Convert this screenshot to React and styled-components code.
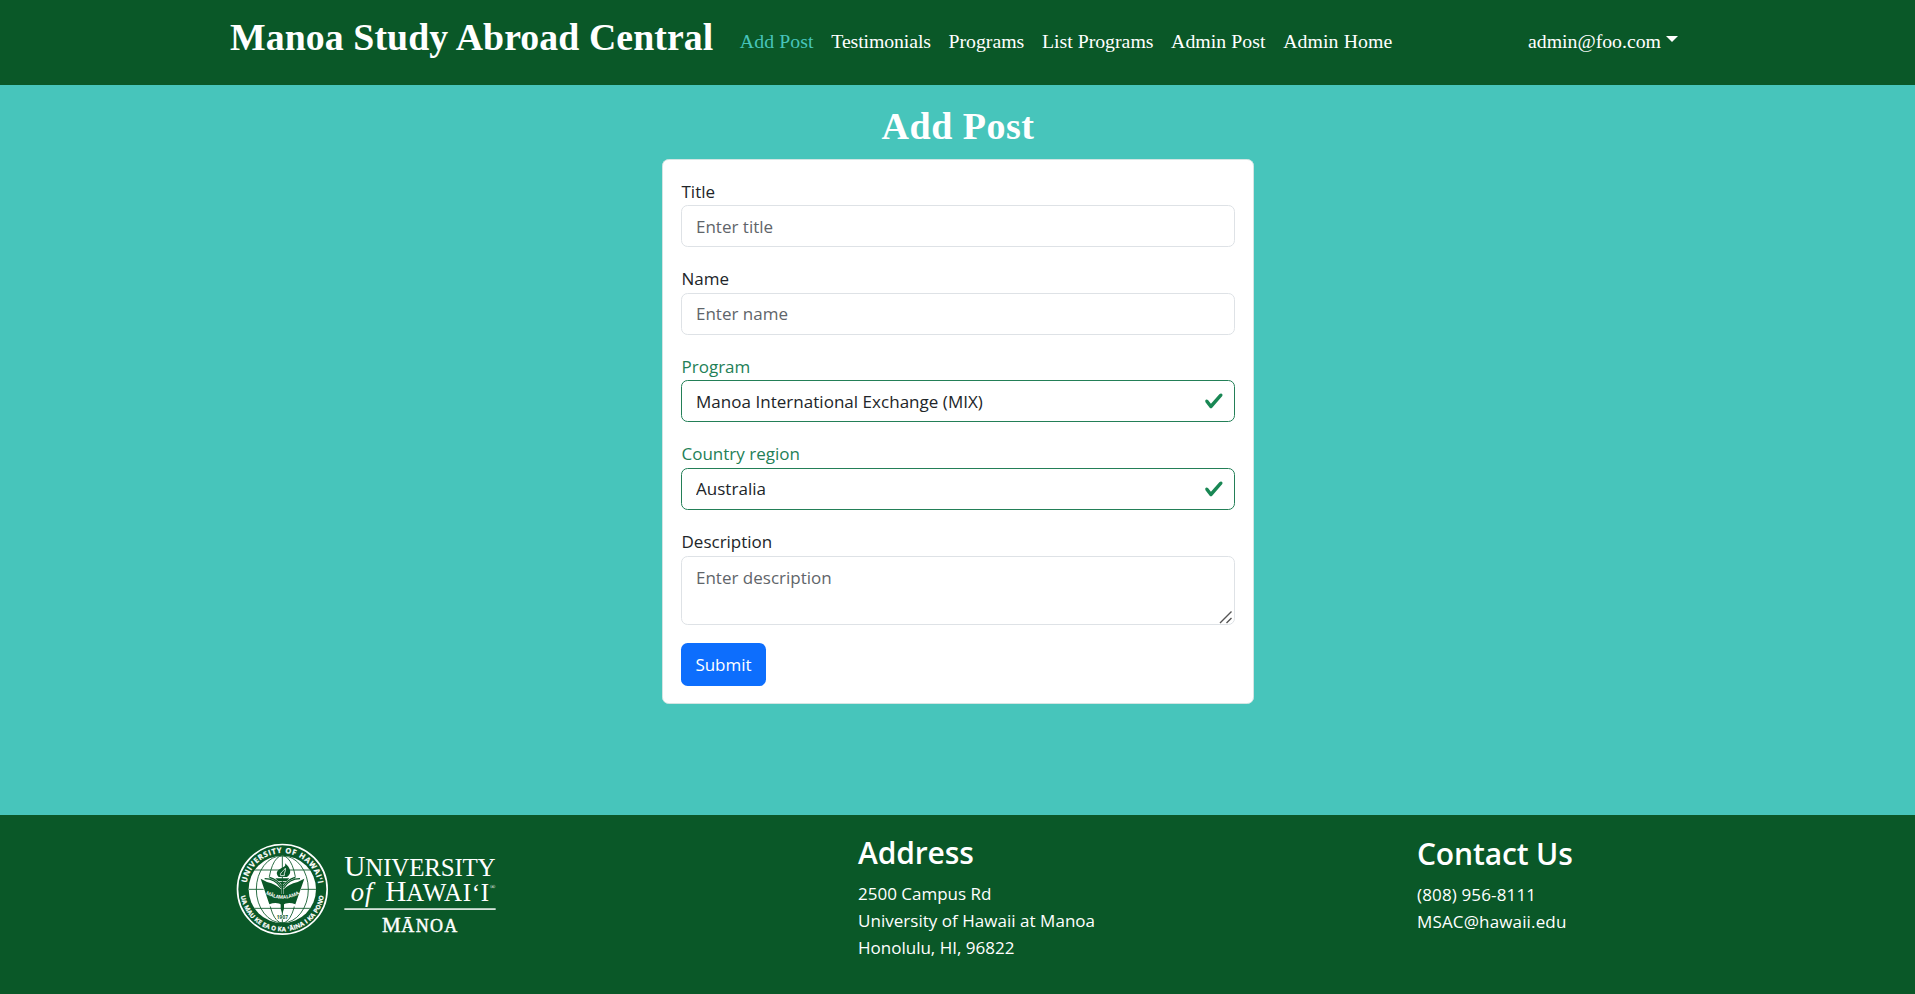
import React from "react";
import styled, { createGlobalStyle } from "styled-components";

const green = "#0a5828";
const teal = "#47c5bb";
const validGreen = "#237f57";
const sans = '"Open Sans", "Noto Sans", sans-serif';
const serif = '"Liberation Serif", "Times New Roman", serif';

const GlobalStyle = createGlobalStyle`
  *, *::before, *::after { box-sizing: border-box; }
  body {
    margin: 0;
    background: ${teal};
    color: #212529;
    font: 400 17px/27px ${sans};
  }
`;

const Page = styled.div`
  display: flex;
  flex-direction: column;
  height: 994px;
  overflow: hidden;
`;

const Header = styled.header`
  display: flex;
  align-items: flex-start;
  height: 85px;
  padding: 14px 237px 0 230px;
  background: ${green};
  color: #fff;
  font-family: ${serif};
`;

const Brand = styled.a`
  width: 501px;
  font-size: 37.8px;
  font-weight: 700;
  line-height: 46px;
  letter-spacing: 0.08px;
  white-space: nowrap;
`;

const Nav = styled.nav`
  display: flex;
  flex: 1;
  padding-top: 12px;
`;

const NavLink = styled.a`
  padding: 0 8.8px;
  font-size: 19.8px;
  line-height: 30px;
  white-space: nowrap;
  letter-spacing: ${(p) => p.$tracking || 0}px;
  color: ${(p) => (p.$active ? teal : "#fff")};
`;

const UserMenu = styled.a`
  display: flex;
  gap: 5px;
  padding-top: 12px;
  font-size: 19.8px;
  line-height: 30px;
`;

const Caret = styled.span`
  height: 0;
  margin-top: 10px;
  border-top: 6px solid #fff;
  border-right: 6px solid transparent;
  border-left: 6px solid transparent;
`;

const Main = styled.main`
  display: flex;
  flex: 1;
  flex-direction: column;
  align-items: center;
  padding-top: 18px;
`;

const Heading = styled.h2`
  margin: 0 0 10px;
  padding-left: 1px;
  color: #fff;
  font: 700 38px/46px ${serif};
  letter-spacing: 0.5px;
`;

const Card = styled.form`
  width: 592px;
  padding: 17.5px 18px;
  margin-left: 1px;
  border: 1px solid #d3e5e3;
  border-radius: 6.6px;
  background: #fff;
`;

const Field = styled.div`
  display: flex;
  flex-direction: column;
  margin-bottom: 18px;
`;

const Label = styled.label`
  padding-left: 0.5px;
  line-height: 27.5px;
  color: ${(p) => (p.$valid ? validGreen : "#212529")};
`;

const Control = styled.div`
  display: flex;
  align-items: center;
  height: 42px;
  padding-right: 10px;
  border: 1px solid ${(p) => (p.$valid ? validGreen : "#dee2e6")};
  border-radius: 6.6px;
`;

const Input = styled.input`
  flex: 1;
  height: 40px;
  padding: 0 0 0 14px;
  border: 0;
  outline: 0;
  background: none;
  color: #212529;
  font: inherit;
  &::placeholder { color: #5f656a; opacity: 1; }
`;

const Select = styled.select`
  flex: 1;
  height: 40px;
  padding: 0 0 0 14px;
  border: 0;
  outline: 0;
  appearance: none;
  background: none;
  color: #212529;
  font: inherit;
  letter-spacing: 0.03px;
`;

const TextAreaBox = styled.div`
  position: relative;
  display: flex;
  margin-top: 0.5px;
`;

const TextArea = styled.textarea`
  flex: 1;
  height: 69px;
  padding: 7px 14px;
  border: 1px solid #dee2e6;
  border-radius: 6.6px;
  outline: 0;
  font: inherit;
  resize: none;
  &::placeholder { color: #5f656a; opacity: 1; }
`;

const Grip = styled.svg`
  position: absolute;
  right: 2px;
  bottom: 1px;
`;

const Submit = styled.button`
  display: block;
  width: 85px;
  height: 43px;
  padding: 0;
  border: 0;
  border-radius: 6.6px;
  background: #0d6efd;
  color: #fff;
  font: inherit;
`;

const Footer = styled.footer`
  display: grid;
  grid-template-columns: 622px 559px 1fr;
  height: 179px;
  padding-left: 236px;
  background: ${green};
  color: #fff;
`;

const LogoCell = styled.div`
  padding-top: 28px;
`;

const InfoColumn = styled.section`
  padding-top: ${(p) => p.$top}px;
`;

const InfoTitle = styled.h3`
  margin: 0 0 9px;
  font-size: 30px;
  font-weight: 600;
  line-height: 36px;
  letter-spacing: -0.15px;
`;

const InfoLine = styled.div`
  white-space: nowrap;
  letter-spacing: ${(p) => p.$tracking || 0}px;
`;

const Check = () => (
  <svg width="19.8" height="19.8" viewBox="0 0 8 8">
    <path
      fill="#198754"
      d="M2.3 6.73.6 4.53c-.4-1.04.46-1.4 1.1-.8l1.1 1.4 3.4-3.8c.6-.63 1.6-.27 1.2.7l-4 4.6c-.43.5-.8.4-1.1.1z"
    />
  </svg>
);

const Seal = () => (
  <g>
    <defs>
      <path id="ringTop" d="M63 268a109 109 0 0 1 218 0" />
      <path id="ringLeadIn" d="M65.500 245A109 109 0 0 1 278.500 245" />
      <path id="ringBottom" d="M46 268a126 126 0 0 0 252 0" />
      <path id="bookBand" d="M122 282Q172 310 223 282" />
      <clipPath id="globe"><circle cx="172" cy="268" r="101" /></clipPath>
    </defs>
    <circle cx="172" cy="268" r="134.5" fill="none" stroke="#fff" strokeWidth="5" />
    <circle cx="172" cy="268" r="101" fill="#fff" />
    <g fill="none" stroke={green} strokeWidth="2.6" clipPath="url(#globe)">
      <path d="M172 167v202M71 268h202M88 210h168M88 325h168" />
      <ellipse cx="172" cy="268" rx="42" ry="101" />
      <ellipse cx="172" cy="268" rx="78" ry="101" />
    </g>
    <path d="M103 231L134 320Q154 312 172 320Q190 312 210 320L241 231Q205 222 172 262Q139 222 103 231Z" fill="#fff" />
    <path
      d="M107 236L133 313Q154 304 172 315Q190 304 211 313L238 236L218 246Q190 253 176 268L176 282L168 282L168 268Q154 253 126 246Z"
      fill={green}
    />
    <path d="M119 236Q151 236 168 264M134 232Q158 239 169 259M225 236Q193 236 176 264M210 232Q186 239 175 259" fill="none" stroke={green} strokeWidth="3.5" />
    <path d="M169 249h6v38h-6z" fill={green} />
    <path d="M151 235h42l-8 8h-26zM161 245h22l-8 7h-6z" fill={green} />
    <path d="M161 231C147 216 162 208 174 202C183 197 181 196 180 190C197 204 202 220 186 231Z" fill={green} />
    <path d="M167 227C163 219 175 214 181 205C183 215 176 218 178 227Z" fill="none" stroke="#fff" strokeWidth="2.5" />
    <path d="M167 309h10v17l-5 15-5-15z" fill={green} />
    <g fontFamily="Open Sans, sans-serif" fontWeight="700">
      <text fill="#fff" fontSize="14.5">
        <textPath href="#bookBand" textLength="106" lengthAdjust="spacingAndGlyphs">MĀLAMALAMA</textPath>
      </text>
      <rect x="153" y="345" width="38" height="13" fill="#fff" />
      <text x="155" y="357" fill={green} fontSize="14" textLength="34">1907</text>
      <g fill="#fff" stroke="#fff" strokeWidth="0.6">
        <text fontSize="22.5">
          <textPath href="#ringTop" startOffset="19" textLength="306" lengthAdjust="spacing">UNIVERSITY OF HAWAIʻI</textPath>
        </text>
        <text fontSize="18.5">
          <textPath href="#ringBottom" startOffset="20" textLength="356" lengthAdjust="spacing">UA MAU KE EA O KA ʻĀINA I KA PONO</textPath>
        </text>
      </g>
    </g>
  </g>
);

const UniversityLogo = () => (
  <svg width="262" height="93" viewBox="33 129 786 279">
    <Seal />
    <g fill="#fff" fontFamily="Liberation Serif, serif">
      <text x="358" y="227" fontSize="88">U</text>
      <text x="421" y="227" fontSize="75" textLength="391">NIVERSITY</text>
      <text x="377" y="303" fontSize="80" fontStyle="italic" textLength="65">of</text>
      <text x="481" y="303" fontSize="88">H</text>
      <text x="543" y="303" fontSize="75" textLength="249">AWAIʻI</text>
      <text x="795" y="268" fontSize="21">®</text>
      <rect x="358" y="325" width="454" height="4.5" />
      <g stroke="#fff" strokeWidth="1.3">
        <text x="471" y="395" fontSize="63">M</text>
        <text x="529" y="395" fontSize="54" textLength="168">ĀNOA</text>
      </g>
    </g>
  </svg>
);

const links = [
  { text: "Add Post", active: true, tracking: 0.1 },
  { text: "Testimonials", tracking: -0.1 },
  { text: "Programs" },
  { text: "List Programs" },
  { text: "Admin Post", tracking: 0.05 },
  { text: "Admin Home", tracking: 0.1 },
];

export default function App() {
  return (
    <Page>
      <GlobalStyle />
      <Header>
        <Brand>Manoa Study Abroad Central</Brand>
        <Nav>
          {links.map((l) => (
            <NavLink key={l.text} $active={l.active} $tracking={l.tracking}>{l.text}</NavLink>
          ))}
        </Nav>
        <UserMenu>admin@foo.com<Caret /></UserMenu>
      </Header>
      <Main>
        <Heading>Add Post</Heading>
        <Card>
          <Field>
            <Label>Title</Label>
            <Control><Input placeholder="Enter title" /></Control>
          </Field>
          <Field>
            <Label>Name</Label>
            <Control><Input placeholder="Enter name" /></Control>
          </Field>
          <Field>
            <Label $valid>Program</Label>
            <Control $valid>
              <Select><option>Manoa International Exchange (MIX)</option></Select>
              <Check />
            </Control>
          </Field>
          <Field>
            <Label $valid>Country region</Label>
            <Control $valid>
              <Select><option>Australia</option></Select>
              <Check />
            </Control>
          </Field>
          <Field>
            <Label>Description</Label>
            <TextAreaBox>
              <TextArea placeholder="Enter description" />
              <Grip width="14" height="14" viewBox="0 0 14 14">
                <path d="M1 13L12.500 1.500M7.500 13L12.500 8" stroke="#555" strokeWidth="1.4" fill="none" />
              </Grip>
            </TextAreaBox>
          </Field>
          <Submit type="button">Submit</Submit>
        </Card>
      </Main>
      <Footer>
        <LogoCell><UniversityLogo /></LogoCell>
        <InfoColumn $top={20}>
          <InfoTitle>Address</InfoTitle>
          <InfoLine>2500 Campus Rd</InfoLine>
          <InfoLine $tracking={0.03}>University of Hawaii at Manoa</InfoLine>
          <InfoLine>Honolulu, HI, 96822</InfoLine>
        </InfoColumn>
        <InfoColumn $top={21}>
          <InfoTitle>Contact Us</InfoTitle>
          <InfoLine $tracking={0.15}>(808) 956-8111</InfoLine>
          <InfoLine $tracking={0.15}>MSAC@hawaii.edu</InfoLine>
        </InfoColumn>
      </Footer>
    </Page>
  );
}
